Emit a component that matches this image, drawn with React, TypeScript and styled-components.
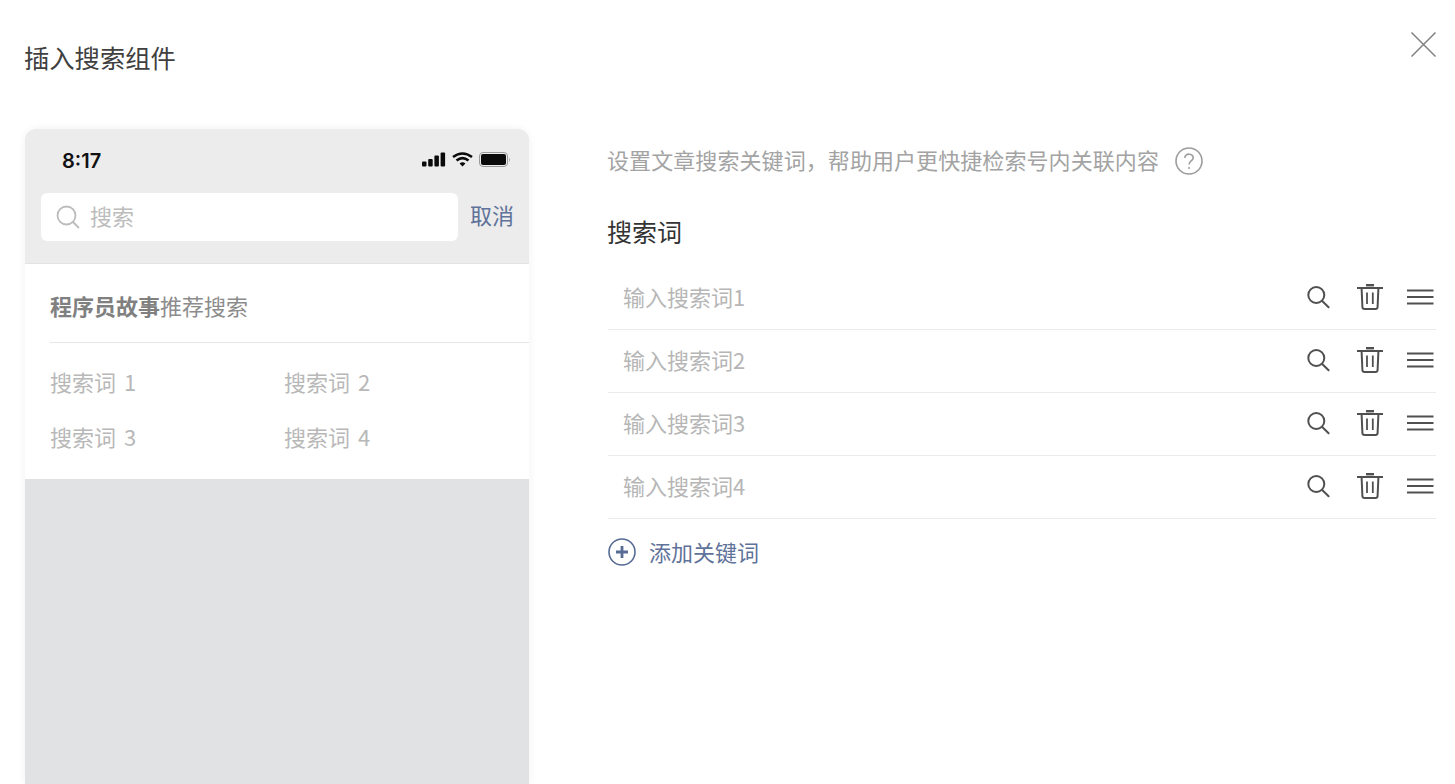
import React from "react";
import styled, { createGlobalStyle } from "styled-components";

const Global = createGlobalStyle`
  html, body { margin: 0; padding: 0; background: #fff; height: 100%; overflow: hidden; }
  body { font-family: "Noto Sans CJK SC", "Liberation Sans", sans-serif; }
`;
const Page = styled.div`
  width: 1455px; height: 784px; overflow: hidden; display: flex; flex-direction: column;
`;
const Header = styled.header`
  height: 129px; flex: none; display: flex; justify-content: space-between; align-items: flex-start;
  padding: 0 18px 0 25px; box-sizing: border-box;
`;
const Title = styled.h1`
  margin: 39px 0 0 -1px; font-size: 25.3px; line-height: 36px; font-weight: 400; color: #404040;
`;
const CloseButton = styled.button`
  margin-top: 31px; width: 27px; height: 27px; padding: 0; border: 0; background: none; display: block;
  svg { display: block; }
`;
const Body = styled.main`
  flex: 1; display: flex; padding-left: 25px; min-height: 0;
`;
const Phone = styled.section`
  width: 504px; flex: none; background: #e1e2e4; border-radius: 12px 12px 0 0; overflow: hidden;
  box-shadow: 0 0 8px rgba(0, 0, 0, 0.06);
`;
const PhoneTop = styled.div`
  background: #ececec; height: 135px; box-sizing: border-box; border-bottom: 1px solid #e2e2e2;
`;
const StatusBar = styled.div`
  height: 64px; display: flex; align-items: center; justify-content: space-between; padding: 0 18px 0 37px;
  box-sizing: border-box;
`;
const Clock = styled.span`
  font-family: Inter, "Liberation Sans", sans-serif; font-size: 20px; font-weight: 600; color: #111;
`;
const StatusIcons = styled.div`
  display: flex; align-items: center; gap: 6px; margin-bottom: 3px;
  svg { display: block; }
`;
const SearchRow = styled.div`
  display: flex; align-items: center; padding: 0 14px 0 16px; justify-content: space-between;
`;
const SearchBox = styled.div`
  width: 417px; height: 48px; background: #fff; border-radius: 6px; display: flex; align-items: center;
  padding-left: 15px; box-sizing: border-box; gap: 10px; color: #bcbcbc; font-size: 22px;
  svg { display: block; }
`;
const SearchText = styled.span`
  margin-bottom: 4px;
`;
const Cancel = styled.span`
  font-size: 22px; color: #5f7299; margin: 0 1px 6px 0;
`;
const Suggest = styled.div`
  background: #fff; height: 215px; box-sizing: border-box; padding-left: 25px;
`;
const SuggestHead = styled.div`
  height: 79px; display: flex; align-items: center; border-bottom: 1px solid #e6e6e6; font-size: 22px; color: #8c8c8c;
  box-sizing: border-box; padding-top: 3px;
  b { font-weight: 700; color: #808080; }
`;
const WordGrid = styled.div`
  display: grid; grid-template-columns: 234px 1fr; grid-auto-rows: 55px; padding-top: 11px;
`;
const Word = styled.span`
  font-size: 22px; line-height: 55px; color: #b8b8b8; word-spacing: 3px;
`;
const Panel = styled.section`
  margin-left: 79px; width: 828px; flex: none;
`;
const Hint = styled.div`
  display: flex; align-items: center; height: 64px; font-size: 22px; color: #a3a3a3; gap: 16px; margin-left: -1px;
  svg { display: block; }
`;
const HintText = styled.span`
  margin-bottom: 4px; letter-spacing: 0.08px;
`;
const FieldLabel = styled.div`
  font-size: 25px; line-height: 36px; color: #333; margin: 20px 0 18px -1px;
`;
const Row = styled.div`
  height: 63px; box-sizing: border-box; border-bottom: 1px solid #ebebeb; display: flex; align-items: center;
  justify-content: space-between; padding: 0 0 0 15px;
`;
const Placeholder = styled.span`
  font-size: 22px; color: #b6b6b6; margin-bottom: 4px;
`;
const Actions = styled.div`
  display: flex; align-items: center; gap: 24px; margin-right: 2px; margin-top: -2px;
  svg { display: block; }
`;
const AddRow = styled.div`
  display: flex; align-items: center; gap: 13px; height: 66px; color: #5f7299; font-size: 22px;
  svg { display: block; }
`;
const AddText = styled.span`
  margin-bottom: 3px;
`;

const ink = "#505050";
const SearchIcon = () => (
  <svg width="26" height="23" viewBox="0 0 26 23" fill="none" stroke={ink} strokeWidth="2">
    <circle cx="9.3" cy="9" r="8" />
    <path d="M15.2 15 L21.6 21.2" strokeLinecap="round" />
  </svg>
);
const TrashIcon = () => (
  <svg width="26" height="26" viewBox="0 0 26 26" fill="none" stroke={ink} strokeWidth="2">
    <path d="M0 4 H26" />
    <path d="M9 1.2 H17" strokeWidth="2.4" />
    <path d="M4.6 4.5 L5.4 23 Q5.5 25 7.5 25 H18.5 Q20.5 25 20.6 23 L21.4 4.5" />
    <path d="M10 8.5 V20 M15.8 8.5 V20" strokeWidth="1.8" />
  </svg>
);
const MenuIcon = () => (
  <svg width="27" height="16" viewBox="0 0 27 16" fill="none" stroke={ink} strokeWidth="2">
    <path d="M0 1.5 H26.5 M0 8 H26.5 M0 14.5 H26.5" />
  </svg>
);

const words = ["搜索词 1", "搜索词 2", "搜索词 3", "搜索词 4"];
const rows = ["输入搜索词1", "输入搜索词2", "输入搜索词3", "输入搜索词4"];

export default function App() {
  return (
    <Page>
      <Global />
      <Header>
        <Title>插入搜索组件</Title>
        <CloseButton aria-label="关闭">
          <svg width="27" height="27" viewBox="0 0 27 27" stroke="#808080" strokeWidth="1.5" fill="none">
            <path d="M1.5 1.5 L25.5 25.5 M25.5 1.5 L1.5 25.5" />
          </svg>
        </CloseButton>
      </Header>
      <Body>
        <Phone>
          <PhoneTop>
            <StatusBar>
              <Clock>8:17</Clock>
              <StatusIcons>
                <svg width="24" height="15" viewBox="0 0 24 15" fill="#0a0a0a">
                  <rect x="0" y="9.5" width="4.5" height="5" rx="1" />
                  <rect x="6.2" y="7" width="4.5" height="7.5" rx="1" />
                  <rect x="12.4" y="3.5" width="4.5" height="11" rx="1" />
                  <rect x="18.6" y="0.5" width="4.5" height="14" rx="1" />
                </svg>
                <svg width="21" height="15" viewBox="0 0 21 15" fill="none" stroke="#0a0a0a" strokeWidth="2.6">
                  <path d="M1 5 Q10.5 -2 20 5" />
                  <path d="M4.5 8.5 Q10.5 3.6 16.5 8.5" />
                  <path d="M10.5 14.5 L7.6 11.4 Q10.5 9.3 13.4 11.4 Z" fill="#0a0a0a" stroke="none" />
                </svg>
                <svg width="32" height="15" viewBox="0 0 32 15" fill="none">
                  <rect x="0.5" y="0.5" width="28" height="14" rx="3.5" stroke="#9a9a9a" />
                  <rect x="2" y="2" width="25" height="11" rx="2" fill="#0a0a0a" />
                  <path d="M30 5 Q31.5 7.5 30 10 Z" fill="#9a9a9a" />
                </svg>
              </StatusIcons>
            </StatusBar>
            <SearchRow>
              <SearchBox>
                <svg width="24" height="24" viewBox="0 0 24 24" fill="none" stroke="#bcbcbc" strokeWidth="1.8">
                  <circle cx="10.5" cy="10.5" r="9" />
                  <path d="M17 17 L22.5 22.5" strokeLinecap="round" />
                </svg>
                <SearchText>搜索</SearchText>
              </SearchBox>
              <Cancel>取消</Cancel>
            </SearchRow>
          </PhoneTop>
          <Suggest>
            <SuggestHead>
              <span><b>程序员故事</b>推荐搜索</span>
            </SuggestHead>
            <WordGrid>
              {words.map((w) => (
                <Word key={w}>{w}</Word>
              ))}
            </WordGrid>
          </Suggest>
        </Phone>
        <Panel>
          <Hint>
            <HintText>设置文章搜索关键词，帮助用户更快捷检索号内关联内容</HintText>
            <svg width="28" height="28" viewBox="0 0 28 28" fill="none" stroke="#9d9d9d" strokeWidth="1.6">
              <circle cx="14" cy="14" r="13" />
              <path d="M9.8 11 C9.8 5.8 18.2 6 18.2 11 C18.2 14 14 14 14 17.5" fill="none" />
              <circle cx="14" cy="21" r="1" fill="#9d9d9d" stroke="none" />
            </svg>
          </Hint>
          <FieldLabel>搜索词</FieldLabel>
          {rows.map((r) => (
            <Row key={r}>
              <Placeholder>{r}</Placeholder>
              <Actions>
                <SearchIcon />
                <TrashIcon />
                <MenuIcon />
              </Actions>
            </Row>
          ))}
          <AddRow>
            <svg width="28" height="28" viewBox="0 0 28 28" fill="none" stroke="#576b95">
              <circle cx="14" cy="14" r="13" strokeWidth="1.6" />
              <path d="M8 14 H20 M14 8 V20" strokeWidth="2.8" />
            </svg>
            <AddText>添加关键词</AddText>
          </AddRow>
        </Panel>
      </Body>
    </Page>
  );
}
